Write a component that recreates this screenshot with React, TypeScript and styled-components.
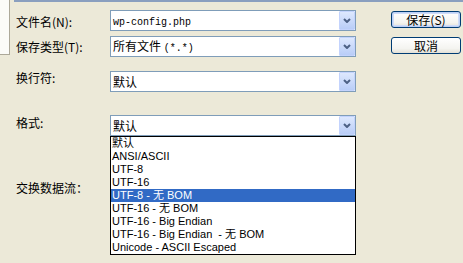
import * as React from 'react';
import styled, { createGlobalStyle } from 'styled-components';

const GlobalStyle = createGlobalStyle`
  html, body {
    margin: 0;
    padding: 0;
    background: #ece9d8;
  }
  body {
    font-family: "Noto Sans CJK SC", sans-serif;
    font-size: 12px;
    color: #000;
  }
`;

/**
 * Layout
 */
const Frame = styled.div`
  display: flex;
  width: 463px;
  height: 263px;
  overflow: hidden;
  background: #ece9d8;
`;

const SidePanel = styled.div`
  flex: none;
  width: 9px;
  height: 54px;
  background: #fbfbf8;
  border-right: 1px solid #aca899;
  border-bottom: 1px solid #aca899;
`;

const Main = styled.div`
  flex: 1;
  margin-left: 4px;
  border-top: 2px solid #8a9fbf;
`;

const Row = styled.div<{ $gap: number }>`
  display: flex;
  align-items: flex-start;
  height: 21px;
  margin-top: ${({ $gap }) => $gap}px;
`;

const Label = styled.div<{ $offset: number }>`
  flex: none;
  width: 94px;
  padding-left: 2px;
  padding-top: ${({ $offset }) => $offset}px;
  line-height: 14px;
  white-space: nowrap;
`;

/**
 * Combo box
 */
const Combo = styled.div`
  position: relative;
  flex: none;
  display: flex;
  align-items: center;
  box-sizing: border-box;
  width: 246px;
  height: 21px;
  border: 1px solid #7f9db9;
  background: #fff;
`;

const ComboText = styled.div`
  flex: 1;
  padding-left: 2px;
  line-height: 19px;
  white-space: nowrap;
`;

const Mono = styled.span`
  font-family: "Liberation Mono", monospace;
  font-size: 10px;
`;

const ComboButton = styled.div`
  flex: none;
  display: flex;
  align-items: center;
  justify-content: center;
  box-sizing: border-box;
  width: 16px;
  height: 19px;
  border: 1px solid #c3d3fd;
  border-radius: 1px;
  background: linear-gradient(#dde8fe, #b9cdf7);
`;

const Chevron = () => (
  <svg width="8" height="5" viewBox="0 0 8 5">
    <path d="M1 1 L4 4 L7 1" fill="none" stroke="#4d6185" strokeWidth="2" />
  </svg>
);

const DropList = styled.ul`
  position: absolute;
  top: 20px;
  left: -1px;
  z-index: 2;
  box-sizing: border-box;
  width: 246px;
  margin: 0;
  padding: 0;
  list-style: none;
  border: 1px solid #000;
  background: #fff;
  font-family: "Liberation Sans", "Noto Sans CJK SC", sans-serif;
  font-size: 11px;
`;

const DropItem = styled.li<{ $selected?: boolean }>`
  height: 13px;
  line-height: 13px;
  padding-left: 1px;
  white-space: pre;
  color: ${({ $selected }) => ($selected ? '#fff' : '#000')};
  background: ${({ $selected }) => ($selected ? '#316ac5' : 'transparent')};
`;

/**
 * Buttons
 */
const XPButton = styled.div<{ $primary?: boolean }>`
  flex: none;
  display: flex;
  align-items: center;
  justify-content: center;
  box-sizing: border-box;
  width: 70px;
  height: 17px;
  margin-left: 35px;
  margin-top: 1px;
  border: 1px solid #003c74;
  border-radius: 3px;
  background: linear-gradient(#ffffff, #f4f4f0 70%, #e3e0d6);
  box-shadow: ${({ $primary }) =>
    $primary ? 'inset 0 0 0 1px #bcd0f6, inset 0 0 0 2px #cfdcf8' : 'none'};
  line-height: 14px;
`;

const formats = [
  '默认',
  'ANSI/ASCII',
  'UTF-8',
  'UTF-16',
  'UTF-8 - 无 BOM',
  'UTF-16 - 无 BOM',
  'UTF-16 - Big Endian',
  'UTF-16 - Big Endian  - 无 BOM',
  'Unicode - ASCII Escaped',
];

const App = () => (
  <>
    <GlobalStyle />
    <Frame>
      <SidePanel />
      <Main>
        <Row $gap={8}>
          <Label $offset={5}>文件名(N):</Label>
          <Combo>
            <ComboText>
              <Mono>wp-config.php</Mono>
            </ComboText>
            <ComboButton>
              <Chevron />
            </ComboButton>
          </Combo>
          <XPButton $primary>保存(S)</XPButton>
        </Row>
        <Row $gap={5}>
          <Label $offset={4}>保存类型(T):</Label>
          <Combo>
            <ComboText>
              所有文件 <Mono>(*.*)</Mono>
            </ComboText>
            <ComboButton>
              <Chevron />
            </ComboButton>
          </Combo>
          <XPButton>取消</XPButton>
        </Row>
        <Row $gap={14}>
          <Label $offset={0}>换行符:</Label>
          <Combo>
            <ComboText>默认</ComboText>
            <ComboButton>
              <Chevron />
            </ComboButton>
          </Combo>
        </Row>
        <Row $gap={23}>
          <Label $offset={1}>格式:</Label>
          <Combo>
            <ComboText>默认</ComboText>
            <ComboButton>
              <Chevron />
            </ComboButton>
            <DropList>
              {formats.map((f) => (
                <DropItem key={f} $selected={f === 'UTF-8 - 无 BOM'}>
                  {f}
                </DropItem>
              ))}
            </DropList>
          </Combo>
        </Row>
        <Row $gap={45}>
          <Label $offset={0}>交换数据流：</Label>
        </Row>
      </Main>
    </Frame>
  </>
);

export default App;
